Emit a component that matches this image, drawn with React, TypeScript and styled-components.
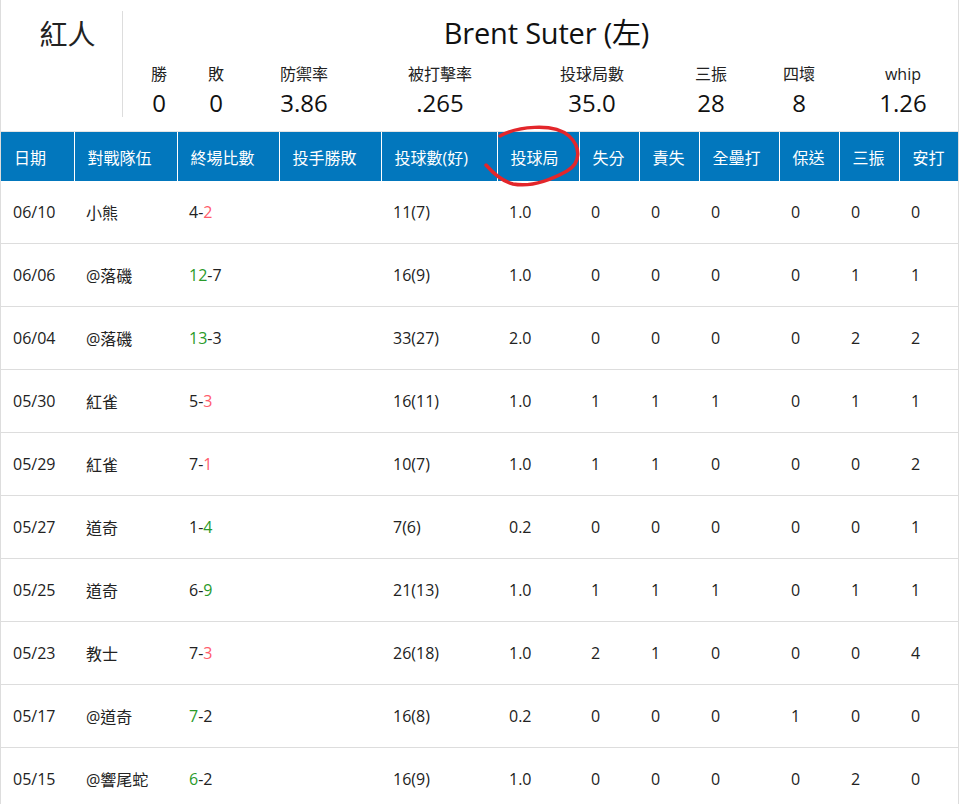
import React from "react";
import styled, { createGlobalStyle } from "styled-components";

const GlobalStyle = createGlobalStyle`
  html, body { margin: 0; padding: 0; background: #fff; }
  body {
    font-family: "Open Sans", "Noto Sans CJK TC", sans-serif;
    color: #222;
  }
`;

const Page = styled.div`
  position: relative;
  width: 959px;
  box-sizing: border-box;
  border-left: 1px solid #ddd;
  border-right: 1px solid #ddd;
`;

const Top = styled.div`
  display: flex;
  height: 131px;
  border-bottom: 1px solid #e4e4e4;
`;

const TeamBox = styled.div`
  width: 122px;
  margin-top: 11px;
  height: 106px;
  border-right: 1px solid #ddd;
  display: flex;
  justify-content: center;
  padding-left: 12px;
  box-sizing: border-box;
`;

const TeamName = styled.div`
  font-family: "Noto Sans CJK TC", sans-serif;
  font-size: 28px;
  line-height: 40px;
  margin-top: 2px;
  color: #222;
`;

const Info = styled.div`
  flex: 1;
  display: flex;
  flex-direction: column;
`;

const Title = styled.div`
  font-size: 29px;
  line-height: 40px;
  margin-top: 13px;
  padding-left: 12px;
  text-align: center;
  color: #111;
  letter-spacing: -0.2px;
`;

const Stats = styled.div`
  display: grid;
  grid-template-columns: 68px 46px 130px 142px 162px 76px 100px 108px;
  margin-left: 2px;
  margin-top: 11px;
`;

const Stat = styled.div`
  display: flex;
  flex-direction: column;
  align-items: center;
`;

const StatLabel = styled.div`
  font-size: 16px;
  line-height: 20px;
  color: #222;
  white-space: nowrap;
`;

const StatValue = styled.div`
  font-size: 24px;
  line-height: 30px;
  margin-top: 4px;
  color: #111;
`;

const Table = styled.table`
  width: 957px;
  border-collapse: collapse;
  table-layout: fixed;
`;

const HeadCell = styled.th`
  background: #0277bd;
  color: #fff;
  font-weight: normal;
  font-size: 16px;
  text-align: left;
  height: 49px;
  padding: 0 0 0 13px;
  border-left: 1px solid #fff;
  white-space: nowrap;
  &:first-child { border-left: none; }
`;

const Row = styled.tr`
  border-bottom: 1px solid #ddd;
`;

const Cell = styled.td`
  font-size: 16px;
  height: 62px;
  padding: 0 0 0 12px;
  color: #222;
  white-space: nowrap;
`;

const Score = styled.span<{ $tone?: "win" | "loss" }>`
  color: ${(p) => (p.$tone === "win" ? "#2a9a2a" : p.$tone === "loss" ? "#ff5c6c" : "#222")};
`;

const Marker = styled.svg`
  position: absolute;
  left: 0;
  top: 0;
  pointer-events: none;
`;

const widths = [73, 103, 102, 102, 116, 82, 60, 60, 80, 60, 60, 59];
const heads = ["日期", "對戰隊伍", "終場比數", "投手勝敗", "投球數(好)", "投球局", "失分", "責失", "全壘打", "保送", "三振", "安打"];

type Game = {
  date: string;
  opp: string;
  a: string;
  b: string;
  color: "a" | "b";
  tone: "win" | "loss";
  pitches: string;
  ip: string;
  rest: string[];
};

const games: Game[] = [
  { date: "06/10", opp: "小熊", a: "4", b: "2", color: "b", tone: "loss", pitches: "11(7)", ip: "1.0", rest: ["0", "0", "0", "0", "0", "0"] },
  { date: "06/06", opp: "@落磯", a: "12", b: "7", color: "a", tone: "win", pitches: "16(9)", ip: "1.0", rest: ["0", "0", "0", "0", "1", "1"] },
  { date: "06/04", opp: "@落磯", a: "13", b: "3", color: "a", tone: "win", pitches: "33(27)", ip: "2.0", rest: ["0", "0", "0", "0", "2", "2"] },
  { date: "05/30", opp: "紅雀", a: "5", b: "3", color: "b", tone: "loss", pitches: "16(11)", ip: "1.0", rest: ["1", "1", "1", "0", "1", "1"] },
  { date: "05/29", opp: "紅雀", a: "7", b: "1", color: "b", tone: "loss", pitches: "10(7)", ip: "1.0", rest: ["1", "1", "0", "0", "0", "2"] },
  { date: "05/27", opp: "道奇", a: "1", b: "4", color: "b", tone: "win", pitches: "7(6)", ip: "0.2", rest: ["0", "0", "0", "0", "0", "1"] },
  { date: "05/25", opp: "道奇", a: "6", b: "9", color: "b", tone: "win", pitches: "21(13)", ip: "1.0", rest: ["1", "1", "1", "0", "1", "1"] },
  { date: "05/23", opp: "教士", a: "7", b: "3", color: "b", tone: "loss", pitches: "26(18)", ip: "1.0", rest: ["2", "1", "0", "0", "0", "4"] },
  { date: "05/17", opp: "@道奇", a: "7", b: "2", color: "a", tone: "win", pitches: "16(8)", ip: "0.2", rest: ["0", "0", "0", "1", "0", "0"] },
  { date: "05/15", opp: "@響尾蛇", a: "6", b: "2", color: "a", tone: "win", pitches: "16(9)", ip: "1.0", rest: ["0", "0", "0", "0", "2", "0"] },
];

const stats = [
  ["勝", "0"],
  ["敗", "0"],
  ["防禦率", "3.86"],
  ["被打擊率", ".265"],
  ["投球局數", "35.0"],
  ["三振", "28"],
  ["四壞", "8"],
  ["whip", "1.26"],
];

export default function App() {
  return (
    <>
      <GlobalStyle />
      <Page>
        <Top>
          <TeamBox>
            <TeamName>紅人</TeamName>
          </TeamBox>
          <Info>
            <Title>Brent Suter (左)</Title>
            <Stats>
              {stats.map(([l, v]) => (
                <Stat key={l}>
                  <StatLabel>{l}</StatLabel>
                  <StatValue>{v}</StatValue>
                </Stat>
              ))}
            </Stats>
          </Info>
        </Top>
        <Table>
          <colgroup>
            {widths.map((w, i) => (
              <col key={i} style={{ width: w }} />
            ))}
          </colgroup>
          <thead>
            <tr>
              {heads.map((h) => (
                <HeadCell key={h}>{h}</HeadCell>
              ))}
            </tr>
          </thead>
          <tbody>
            {games.map((g) => (
              <Row key={g.date}>
                <Cell>{g.date}</Cell>
                <Cell>{g.opp}</Cell>
                <Cell>
                  <Score $tone={g.color === "a" ? g.tone : undefined}>{g.a}</Score>-
                  <Score $tone={g.color === "b" ? g.tone : undefined}>{g.b}</Score>
                </Cell>
                <Cell></Cell>
                <Cell>{g.pitches}</Cell>
                <Cell>{g.ip}</Cell>
                {g.rest.map((r, i) => (
                  <Cell key={i}>{r}</Cell>
                ))}
              </Row>
            ))}
          </tbody>
        </Table>
        <Marker width="959" height="200" viewBox="0 0 959 200">
          <path
            d="M499 136 C 515 127, 552 122, 568 136 C 580 147, 580 163, 566 171 C 548 181, 528 187, 512 184 C 500 181, 492 173, 485 165"
            fill="none"
            stroke="#e3262b"
            strokeWidth="3.5"
            strokeLinecap="round"
          />
        </Marker>
      </Page>
    </>
  );
}
